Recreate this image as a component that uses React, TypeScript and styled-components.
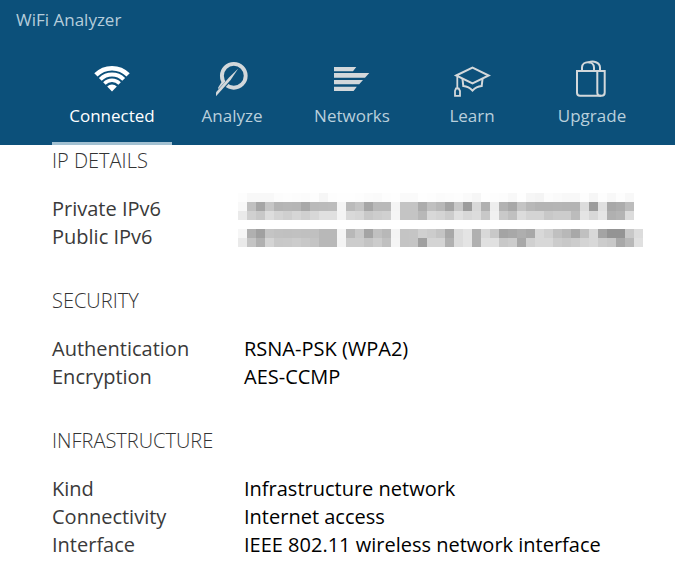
import React, { useState } from "react";
import styled, { createGlobalStyle } from "styled-components";

const NAVY = "#0c507a";

const GlobalStyle = createGlobalStyle`
  * { box-sizing: border-box; }
  body {
    margin: 0;
    background: #fff;
    font-family: "Open Sans", "Noto Sans", sans-serif;
  }
`;

const Header = styled.header`
  background: ${NAVY};
`;

const AppTitle = styled.h1`
  margin: 0;
  padding: 8px 16px;
  font-size: 17px;
  font-weight: 400;
  line-height: 24px;
  color: #b6cddb;
`;

const TabBar = styled.nav`
  display: flex;
  padding: 16px 16px 0 52px;
`;

const Tab = styled.button<{ $active: boolean }>`
  flex: 0 1 120px;
  display: flex;
  flex-direction: column;
  align-items: center;
  gap: 4px;
  padding: 3px 0 13px;
  border: 0;
  border-bottom: 3px solid ${(p) => (p.$active ? "#a3c1d2" : "transparent")};
  background: none;
  font-family: inherit;
  font-size: 17px;
  line-height: 26px;
  color: ${(p) => (p.$active ? "#fff" : "#b9cfdc")};
  cursor: pointer;
`;

const Icon = styled.svg<{ $active: boolean }>`
  width: 40px;
  height: 40px;
  color: ${(p) => (p.$active ? "#fff" : "#d3d8db")};
`;

const Content = styled.main`
  padding: 2px 16px 16px 52px;
`;

const Section = styled.section`
  margin-bottom: 36px;
  &:last-child { margin-bottom: 0; }
`;

const SectionTitle = styled.h2`
  margin: 0 0 20px;
  font-size: 20px;
  font-weight: 300;
  line-height: 28px;
  color: #333;
`;

const Details = styled.dl`
  display: grid;
  grid-template-columns: 192px 1fr;
  margin: 0;
  font-size: 20px;
  line-height: 28px;
`;

const Label = styled.dt`
  color: #3a3a3a;
`;

const Value = styled.dd`
  margin: 0;
  color: #000;
`;

const Mosaic = styled.svg`
  display: block;
  width: 408px;
  height: 28px;
  margin-left: -6px;
`;

const WifiIcon = () => (
  <g fill="none" stroke="currentColor">
    <path d="M3.9 15.9A22.75 22.75 0 0 1 36.1 15.9" strokeWidth="4.6" />
    <path d="M8.3 20.3A16.5 16.5 0 0 1 31.7 20.3" strokeWidth="4" />
    <path d="M12.4 24.4A10.75 10.75 0 0 1 27.6 24.4" strokeWidth="3.5" />
    <path d="M20 32.5L15.2 27.6A6.8 6.8 0 0 1 24.8 27.6Z" fill="currentColor" stroke="none" />
  </g>
);

const AnalyzeIcon = () => (
  <>
    <circle cx="21.8" cy="16.8" r="11.9" fill="none" stroke="currentColor" strokeWidth="3.9" />
    <path d="M26.3 9.3L5 31.5V37L17 24Z" fill={NAVY} stroke={NAVY} strokeWidth="0.8" />
    <path d="M26.3 9.6L17 18.4L4 33.2V37.2L18.6 21Z" fill="currentColor" />
    <path d="M6.2 28.6L10.6 21.4L12.6 23.2L6.2 30.2Z" fill="currentColor" />
  </>
);

const NetworksIcon = () => (
  <path
    d="M2 8H24.3L21 12.2H2ZM2 14.1H37.3L33 18.7H2ZM2 21H31L27.2 25.2H2ZM2 27.7H24.8L21.6 32H2Z"
    fill="currentColor"
  />
);

const LearnIcon = () => (
  <g fill="none" stroke="currentColor" strokeWidth="2">
    <path d="M4.2 16.5L20.5 8.7L36.7 16.5L20.5 24.3Z" />
    <path d="M10.5 20L11.3 27C14.5 27.3 18 28.8 20.5 31.6C23 28.8 26.5 27.3 29.7 27L30.5 20" />
    <path d="M5.3 17.5V29M4 29.5H6.7L8 32V36.8H3V32Z" strokeWidth="1.8" />
  </g>
);

const BagIcon = () => (
  <g fill="none" stroke="currentColor" strokeWidth="2">
    <path d="M5 12H32.7V33.5Q32.7 36.8 29.5 36.8H8Q5 36.8 5 33.8Z" />
    <path d="M25.3 12V33.5Q25.3 36.8 29 36.8" />
    <path d="M10 12V8.5C10 1.5 22 1.5 22 8.5V12" />
    <path d="M16.5 3.5C21 1.5 28 3 28 8.5V12" />
  </g>
);

const TABS = [
  { name: "Connected", Drawing: WifiIcon },
  { name: "Analyze", Drawing: AnalyzeIcon },
  { name: "Networks", Drawing: NetworksIcon },
  { name: "Learn", Drawing: LearnIcon },
  { name: "Upgrade", Drawing: BagIcon },
];

// Grey levels of the redaction mosaic, one hex byte for each 9px cell.
const PRIVATE_MASK = [
  "fd f8 f8 f8 fc fd fc fb fd f6 fd fe fe fd fb fa fd fe fa fa fe fd fb fc fd fa f6 fe fd fc f8 fe f6 f4 fc fa f8 f8 fd f6 fd f8 fd f8",
  "f8 c0 a6 c6 b4 b6 b5 a8 ba bb bc f5 bb c4 a6 b9 b9 f4 c4 c4 ac c0 b8 a4 c8 9c d8 b0 ed b2 a8 c4 b8 b4 b4 b5 b4 b4 dc 9c e0 a8 ac bc",
  "ea d0 c8 dd d4 cf d6 d0 d8 e0 e0 f4 d9 d6 c8 cd d0 f5 c4 c4 b8 d8 d4 cc e0 d8 dc c8 f0 c9 c0 dc d4 d4 c8 cc cc bc e4 d8 e5 b0 b4 dc",
];
const PUBLIC_MASK = [
  "f6 b0 a0 c4 c1 c0 c1 c0 c0 b8 b8 f5 b8 c8 a4 c0 b8 f4 c4 c5 d0 cc c4 a8 dc e4 b0 d8 c8 a4 a8 ae a8 d8 d0 c0 b8 a8 c0 d8 a4 94 94 c8 dc",
  "ea c4 b0 d4 c8 c9 cc c8 c4 b8 b8 f4 cc cc c4 cc c0 f5 c4 c5 a0 d4 d4 b0 dc e4 b0 e0 e0 c8 cc a8 d0 d8 d8 cc c8 cc d4 d8 cc c8 a8 b8 e0",
];

const MaskedValue = ({ rows, top }: { rows: string[]; top: number }) => (
  <Mosaic viewBox="0 0 408 28" shapeRendering="crispEdges" overflow="visible" aria-hidden="true">
    {rows.map((row, y) =>
      row.split(" ").map((level, i) => (
        <rect
          key={`${y}-${i}`}
          x={i * 9}
          y={top + y * 9}
          width={9}
          height={9}
          fill={`#${level}${level}${level}`}
        />
      ))
    )}
  </Mosaic>
);

const SECTIONS: { title: string; rows: [string, React.ReactNode][] }[] = [
  {
    title: "IP DETAILS",
    rows: [
      ["Private IPv6", <MaskedValue rows={PRIVATE_MASK} top={-2} />],
      ["Public IPv6", <MaskedValue rows={PUBLIC_MASK} top={6} />],
    ],
  },
  {
    title: "SECURITY",
    rows: [
      ["Authentication", "RSNA-PSK (WPA2)"],
      ["Encryption", "AES-CCMP"],
    ],
  },
  {
    title: "INFRASTRUCTURE",
    rows: [
      ["Kind", "Infrastructure network"],
      ["Connectivity", "Internet access"],
      ["Interface", "IEEE 802.11 wireless network interface"],
    ],
  },
];

export default function App() {
  const [current, setCurrent] = useState("Connected");
  return (
    <>
      <GlobalStyle />
      <Header>
        <AppTitle>WiFi Analyzer</AppTitle>
        <TabBar>
          {TABS.map(({ name, Drawing }) => (
            <Tab
              key={name}
              type="button"
              $active={name === current}
              aria-current={name === current ? "page" : undefined}
              onClick={() => setCurrent(name)}
            >
              <Icon viewBox="0 0 40 40" $active={name === current} aria-hidden="true">
                <Drawing />
              </Icon>
              {name}
            </Tab>
          ))}
        </TabBar>
      </Header>
      <Content>
        {SECTIONS.map((section) => (
          <Section key={section.title}>
            <SectionTitle>{section.title}</SectionTitle>
            <Details>
              {section.rows.map(([label, value]) => (
                <React.Fragment key={label}>
                  <Label>{label}</Label>
                  <Value>{value}</Value>
                </React.Fragment>
              ))}
            </Details>
          </Section>
        ))}
      </Content>
    </>
  );
}
